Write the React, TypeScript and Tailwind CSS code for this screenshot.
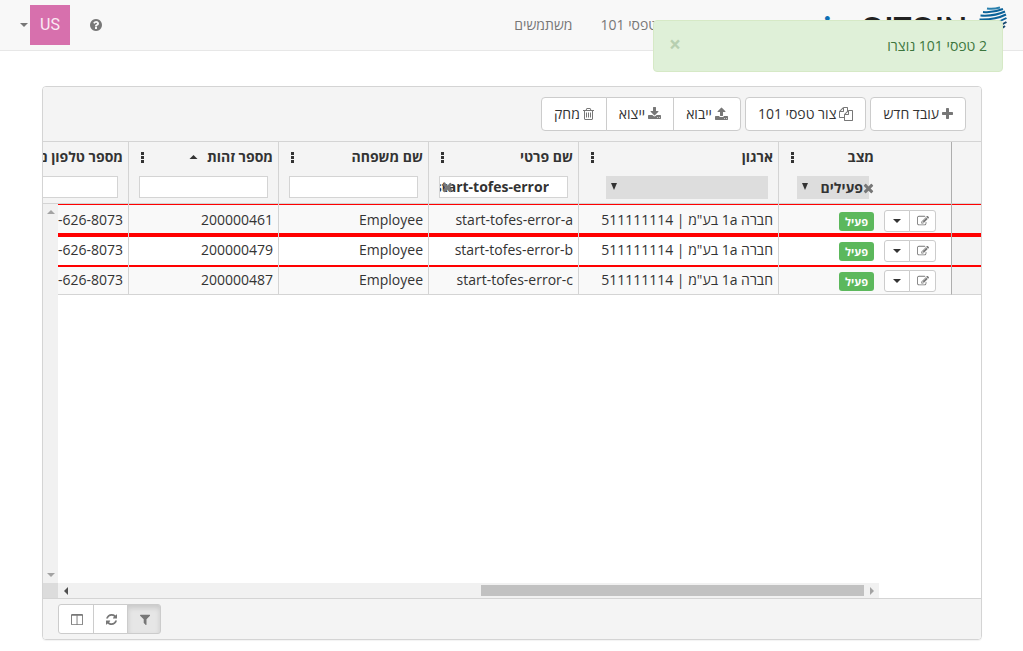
import type { ReactNode } from "react"

const icons = {
  plus: { w: 1408, d: "M1600 736v192q0 40-28 68t-68 28h-416v416q0 40-28 68t-68 28h-192q-40 0-68-28t-28-68v-416h-416q-40 0-68-28t-28-68v-192q0-40 28-68t68-28h416v-416q0-40 28-68t68-28h192q40 0 68 28t28 68v416h416q40 0 68 28t28 68z" },
  copy: { w: 1792, d: "M1696 384q40 0 68 28t28 68v1216q0 40-28 68t-68 28h-960q-40 0-68-28t-28-68v-288h-544q-40 0-68-28t-28-68v-672q0-40 20-88t48-76l408-408q28-28 76-48t88-20h416q40 0 68 28t28 68v328q68-40 128-40h416zm-544 213l-299 299h299v-299zm-640-384l-299 299h299v-299zm196 647l316-316v-416h-384v416q0 40-28 68t-68 28h-416v640h512v-256q0-40 20-88t48-76zm956 804v-1152h-384v416q0 40-28 68t-68 28h-416v640h896z" },
  upload: { w: 1664, d: "M1344 1472q0-26-19-45t-45-19-45 19-19 45 19 45 45 19 45-19 19-45zm256 0q0-26-19-45t-45-19-45 19-19 45 19 45 45 19 45-19 19-45zm128-224v320q0 40-28 68t-68 28h-1472q-40 0-68-28t-28-68v-320q0-40 28-68t68-28h427q21 56 70.5 92t110.5 36h256q61 0 110.5-36t70.5-92h427q40 0 68 28t28 68zm-325-648q-17 40-59 40h-256v448q0 26-19 45t-45 19h-256q-26 0-45-19t-19-45v-448h-256q-42 0-59-40-17-39 14-69l448-448q18-19 45-19t45 19l448 448q31 30 14 69z" },
  download: { w: 1664, d: "M1344 1344q0-26-19-45t-45-19-45 19-19 45 19 45 45 19 45-19 19-45zm256 0q0-26-19-45t-45-19-45 19-19 45 19 45 45 19 45-19 19-45zm128-224v320q0 40-28 68t-68 28h-1472q-40 0-68-28t-28-68v-320q0-40 28-68t68-28h465l135 136q58 56 136 56t136-56l136-136h464q40 0 68 28t28 68zm-325-569q17 41-14 70l-448 448q-18 19-45 19t-45-19l-448-448q-31-29-14-70 17-39 59-39h256v-448q0-26 19-45t45-19h256q26 0 45 19t19 45v448h256q42 0 59 39z" },
  trash: { w: 1408, d: "M704 736v576q0 14-9 23t-23 9h-64q-14 0-23-9t-9-23v-576q0-14 9-23t23-9h64q14 0 23 9t9 23zm256 0v576q0 14-9 23t-23 9h-64q-14 0-23-9t-9-23v-576q0-14 9-23t23-9h64q14 0 23 9t9 23zm256 0v576q0 14-9 23t-23 9h-64q-14 0-23-9t-9-23v-576q0-14 9-23t23-9h64q14 0 23 9t9 23zm128 724v-948h-896v948q0 22 7 40.5t14.5 27 10.5 8.5h832q3 0 10.5-8.5t14.5-27 7-40.5zm-672-1076h448l-48-117q-7-9-17-11h-317q-10 2-17 11zm928 32v64q0 14-9 23t-23 9h-96v948q0 83-47 143.5t-113 60.5h-832q-66 0-113-58.5t-47-141.5v-952h-96q-14 0-23-9t-9-23v-64q0-14 9-23t23-9h309l70-167q15-37 54-63t79-26h320q40 0 79 26t54 63l70 167h309q14 0 23 9t9 23z" },
  help: { w: 1536, d: "M1024 1376v-192q0-14-9-23t-23-9h-192q-14 0-23 9t-9 23v192q0 14 9 23t23 9h192q14 0 23-9t9-23zm256-672q0-88-55.5-163t-138.5-116-170-41q-243 0-371 213-15 24 8 42l132 100q7 6 19 6 16 0 25-12 53-68 86-92 34-24 86-24 48 0 85.5 26t37.5 59q0 38-20 61t-68 45q-63 28-115.5 86.5t-52.5 125.5v36q0 14 9 23t23 9h192q14 0 23-9t9-23q0-19 21.5-49.5t54.5-49.5q32-18 49-28.5t46-35 44.5-48 28-60.5 12.5-81zm384 192q0 209-103 385.5t-279.5 279.5-385.5 103-385.5-103-279.5-279.5-103-385.5 103-385.5 279.5-279.5 385.5-103 385.5 103 279.5 279.5 103 385.5z" },
  refresh: { w: 1536, d: "M1639 1056q0 5-1 7-64 268-268 434.5t-478 166.5q-146 0-282.5-55t-243.5-157l-129 129q-19 19-45 19t-45-19-19-45v-448q0-26 19-45t45-19h448q26 0 45 19t19 45-19 45l-137 137q71 66 161 102t187 36q134 0 250-65t186-179q11-17 53-117 8-23 30-23h192q13 0 22.5 9.5t9.5 22.5zm25-800v448q0 26-19 45t-45 19h-448q-26 0-45-19t-19-45 19-45l138-138q-148-137-349-137-134 0-250 65t-186 179q-11 17-53 117-8 23-30 23h-199q-13 0-22.5-9.5t-9.5-22.5v-7q65-268 270-434.5t480-166.5q146 0 284 55.5t245 156.5l130-129q19-19 45-19t45 19 19 45z" },
  filter: { w: 1408, d: "M1595 295q17 41-14 70l-493 493v742q0 42-39 59-13 5-25 5-27 0-45-19l-256-256q-19-19-19-45v-486l-493-493q-31-29-14-70 17-39 59-39h1280q42 0 59 39z" },
  edit: { w: 1792, d: "M888 1184l116-116-152-152-116 116v56h96v96h56zm440-720q-16-16-33 1l-350 350q-17 17-1 33t33-1l350-350q17-17 1-33zm80 594v190q0 119-84.5 203.5t-203.5 84.5h-832q-119 0-203.5-84.5t-84.5-203.5v-832q0-119 84.5-203.5t203.5-84.5h832q63 0 117 25 15 7 18 23 3 17-9 29l-49 49q-14 14-32 8-23-6-45-6h-832q-66 0-113 47t-47 113v832q0 66 47 113t113 47h832q66 0 113-47t47-113v-126q0-13 9-22l64-64q15-15 35-7t20 29zm-96-738l288 288-672 672h-288v-288zm444 132l-92 92-288-288 92-92q28-28 68-28t68 28l152 152q28 28 28 68t-28 68z" },
  columns: { w: 1664, d: "M224 1536h608v-1152h-640v1120q0 13 9.500 22.500t22.500 9.500zm1376-32v-1120h-640v1152h608q13 0 22.500-9.500t9.500-22.500zm128-1216v1216q0 66-47 113t-113 47h-1344q-66 0-113-47t-47-113v-1216q0-66 47-113t113-47h1344q66 0 113 47t47 113z" },
  times: { w: 1408, d: "M1490 1322q0 40-28 68l-136 136q-28 28-68 28t-68-28l-294-294-294 294q-28 28-68 28t-68-28l-136-136q-28-28-28-68t28-68l294-294-294-294q-28-28-28-68t28-68l136-136q28-28 68-28t68 28l294 294 294-294q28-28 68-28t68 28l136 136q28 28 28 68t-28 68l-294 294 294 294q28 28 28 68z" },
}

function Icon({ name, className = "h-[14px]" }: { name: keyof typeof icons; className?: string }) {
  const { w, d } = icons[name]
  return (
    <svg className={`${className} shrink-0 fill-current`} viewBox={`${(1792 - w) / 2} 0 ${w} 1792`} aria-hidden="true">
      <path d={d} />
    </svg>
  )
}

function Caret({ className = "" }: { className?: string }) {
  return (
    <svg className={`h-1 w-2 fill-current ${className}`} viewBox="0 0 8 4" aria-hidden="true">
      <path d="M0 0h8L4 4z" />
    </svg>
  )
}

function Dots() {
  return (
    <button type="button" aria-label="תפריט עמודה" className="flex flex-col gap-px p-px">
      <i className="size-[3px] bg-[#333]" />
      <i className="size-[3px] bg-[#333]" />
      <i className="size-[3px] bg-[#333]" />
    </button>
  )
}

function Globe() {
  return (
    <svg className="size-7" viewBox="0 0 28 28" fill="none" stroke="#0b6299" strokeWidth="2" aria-hidden="true">
      <path d="M8 2.500Q14 3.500 21 1.500" stroke="#2a80ad" />
      <path d="M4 6Q14 7 24 3" />
      <path d="M1.500 9.500Q15 10.500 26 5.500" />
      <path d="M0.500 13.500Q16 14 27 8.500" />
      <path d="M1 17.500Q17 18 27.500 12" />
      <path d="M3 21.500Q19 22 27.500 16" stroke="#164a70" />
      <path d="M7 25Q19 26 26 20" stroke="#164a70" />
    </svg>
  )
}

function ColumnHead({ title, sorted, children }: { title: string; sorted?: boolean; children: ReactNode }) {
  return (
    <th className="border-b border-l border-[#d4d4d4] p-0 align-top text-right font-bold">
      <div className="flex items-center justify-between pt-1 pr-[5px] pl-[11px]">
        <span className="flex items-center gap-[9px] leading-[22px] whitespace-nowrap">
          {title}
          {sorted && <Caret className="w-[9px] rotate-180" />}
        </span>
        <Dots />
      </div>
      <div className="relative flex px-[10px] pt-2">{children}</div>
    </th>
  )
}

function TextFilter({ label, value = "" }: { label: string; value?: string }) {
  return (
    <>
      <input
        aria-label={label}
        defaultValue={value}
        className="h-[22px] w-full border border-[#d4d4d4] bg-white pr-[18px] pb-[2px] outline-none"
      />
      {value && <Icon name="times" className="absolute top-3 left-[13px] h-[14px] text-[#777]" />}
    </>
  )
}

function SelectFilter({ label, value = "" }: { label: string; value?: string }) {
  return (
    <>
      <div className={value ? "relative w-[72px]" : "relative w-[162px]"}>
        <select aria-label={label} className="h-[23px] w-full appearance-none bg-[#ddd] pr-[6px] pl-4 outline-none">
          <option>{value}</option>
        </select>
        <svg className="pointer-events-none absolute top-[7px] left-[5px] h-[7px] w-[6px] fill-[#333]" viewBox="0 0 6 7" aria-hidden="true">
          <path d="M0 0h6L3 7z" />
        </svg>
      </div>
      {value && <Icon name="times" className="absolute top-[13px] right-[5px] h-[14px] text-[#777]" />}
    </>
  )
}

const employees = [
  { first: "start-tofes-error-a", id: "200000461" },
  { first: "start-tofes-error-b", id: "200000479" },
  { first: "start-tofes-error-c", id: "200000487" },
]

// the separators between failed rows are painted inside the cells
const rowStyles = [
  "h-[31px] bg-[#f9f9f9] *:shadow-[inset_0_1px_#f00,inset_0_-2px_#f00]",
  "h-[30px] bg-white *:shadow-[inset_0_2px_#f00]",
  "h-[30px] bg-[#f9f9f9] *:border-b *:shadow-[inset_0_2px_#f00]",
]

const toolButton = "flex h-[34px] items-center gap-[3px] border border-[#ccc] bg-white px-3 whitespace-nowrap"
const footButton = "flex h-[30px] items-center justify-center border border-[#ccc] pl-[2px] text-[#777]"
const cell = "border-l border-[#d4d4d4] px-[5px] py-0 whitespace-nowrap"

export default function App() {
  return (
    <div dir="rtl" className="min-h-screen bg-white pb-3 font-['Open_Sans','Noto_Sans',sans-serif] text-[14px] leading-5 text-[#333]">
      <nav className="flex h-[51px] border-b border-[#e7e7e7] bg-[#f8f8f8] text-[#777]">
        <a href="#" dir="ltr" className="flex w-[352px] shrink-0 items-start justify-end gap-3 pt-[6px] pr-4 font-['Lato',sans-serif] text-[30px] leading-8 font-bold text-[#222]">
          <span className="flex gap-3 pt-[5px] whitespace-nowrap">
            <span className="text-[#0b6fb5]">io</span>
            <span>OITOIN</span>
          </span>
          <Globe />
        </a>
        <a href="#" className="px-[14px] py-[15px]">טפסי 101</a>
        <a href="#" className="px-[14px] py-[15px]">משתמשים</a>
        <div className="mr-auto flex items-center pl-5">
          <a href="#" aria-label="עזרה" className="px-5"><Icon name="help" /></a>
          <button type="button" className="flex items-center gap-[2px]">
            <span className="flex size-10 items-center justify-center bg-[#d770ad] font-['Roboto',sans-serif] text-base text-[#fbeaf4]">US</span>
            <Caret />
          </button>
        </div>
      </nav>

      <div role="alert" className="fixed top-5 right-5 flex h-[52px] w-[350px] items-center justify-between rounded-[4px] border border-[#d6e9c6] bg-[#dff0d8] px-[15px] text-[#3c763d]">
        <span>2 טפסי 101 נוצרו</span>
        <button type="button" aria-label="סגור" className="pb-1 text-[21px] leading-5 font-bold text-[#b7cfb1]">×</button>
      </div>

      <main className="mt-[35px] mr-[41px] ml-[42px] overflow-hidden rounded-[4px] border border-[#d4d4d4] shadow-[0_1px_1px_rgba(0,0,0,0.05)]">
        <div className="flex gap-1 bg-[#f4f4f4] py-[10px] pr-[15px]">
          <button type="button" className={`${toolButton} rounded-[4px]`}><Icon name="plus" className="h-[14px] text-[#777]" />עובד חדש</button>
          <button type="button" className={`${toolButton} rounded-[4px]`}><Icon name="copy" className="h-[14px] text-[#777]" />צור טפסי 101</button>
          <div className="flex">
            <button type="button" className={`${toolButton} rounded-r-[4px]`}><Icon name="upload" className="h-[14px] text-[#777]" />ייבוא</button>
            <button type="button" className={`${toolButton} -mr-px`}><Icon name="download" className="h-[14px] text-[#777]" />ייצוא</button>
            <button type="button" className={`${toolButton} -mr-px rounded-l-[4px]`}><Icon name="trash" className="h-[14px] text-[#777]" />מחק</button>
          </div>
        </div>

        <div className="relative flex h-[457px] flex-col border-t border-[#d4d4d4]">
          <div className="flex-1 overflow-hidden">
            <table className="w-[1003px] table-fixed border-separate border-spacing-0">
              <colgroup>
                <col className="w-[30px]" />
                <col className="w-[72px]" />
                <col className="w-[101px]" />
                <col className="w-[200px]" />
                <col className="w-[150px]" />
                <col className="w-[150px]" />
                <col className="w-[150px]" />
                <col className="w-[150px]" />
              </colgroup>
              <thead>
                <tr className="h-[62px] bg-[#f4f4f4]">
                  <td className="border-b border-l border-b-[#d4d4d4] border-l-[#aeaeae]" />
                  <td className="border-b border-[#d4d4d4]" />
                  <ColumnHead title="מצב"><SelectFilter label="מצב" value="פעילים" /></ColumnHead>
                  <ColumnHead title="ארגון"><SelectFilter label="ארגון" /></ColumnHead>
                  <ColumnHead title="שם פרטי"><TextFilter label="שם פרטי" value="start-tofes-error" /></ColumnHead>
                  <ColumnHead title="שם משפחה"><TextFilter label="שם משפחה" /></ColumnHead>
                  <ColumnHead title="מספר זהות" sorted><TextFilter label="מספר זהות" /></ColumnHead>
                  <ColumnHead title="מספר טלפון נייד"><TextFilter label="מספר טלפון נייד" /></ColumnHead>
                </tr>
              </thead>
              <tbody>
                {employees.map((e, i) => (
                  <tr key={e.id} className={rowStyles[i]}>
                    <td className="border-l border-b-[#d4d4d4] border-l-[#aeaeae] bg-[#f3f3f3]" />
                    <td className="border-[#d4d4d4] py-0 pr-[15px] pl-[5px]">
                      <div className="flex pt-[2px]">
                        <button type="button" aria-label="עריכה" className="flex h-[22px] w-[27px] items-center justify-center rounded-r-[3px] border border-[#ccc] bg-white text-[#777]">
                          <Icon name="edit" className="h-3" />
                        </button>
                        <button type="button" aria-label="פעולות" className="-mr-px flex h-[22px] w-[26px] items-center justify-center rounded-l-[3px] border border-[#ccc] bg-white">
                          <Caret />
                        </button>
                      </div>
                    </td>
                    <td className={cell}>
                      <span className="mt-[3px] flex h-[19px] w-[35px] items-center justify-center rounded-[3px] bg-[#5cb85c] text-[11px] leading-none font-bold text-white">פעיל</span>
                    </td>
                    <td className={cell}>חברה 1a בע"מ | 511111114</td>
                    <td className={cell}>{e.first}</td>
                    <td className={cell}>Employee</td>
                    <td className={cell}>{e.id}</td>
                    <td className={cell}><span dir="ltr">050-626-8073</span></td>
                  </tr>
                ))}
              </tbody>
            </table>
          </div>

          <div className="absolute top-[62px] bottom-[15px] left-0 flex w-[15px] flex-col items-center justify-between bg-[#f1f1f1] py-[6px] text-[#a3a3a3]">
            <Caret className="rotate-180" />
            <Caret />
          </div>

          <div dir="ltr" className="flex h-[15px] pr-[102px]">
            <div className="w-[15px] bg-[#dcdcdc]" />
            <div className="flex flex-1 items-center bg-[#f1f1f1]">
              <div className="flex w-[15px] justify-center text-[#505050]"><Caret className="rotate-90" /></div>
              <div className="ml-auto h-[11px] w-[383px] bg-[#c1c1c1]" />
              <div className="flex w-[15px] justify-center text-[#a3a3a3]"><Caret className="-rotate-90" /></div>
            </div>
          </div>
        </div>

        <div dir="ltr" className="flex border-t border-[#d4d4d4] bg-[#f4f4f4] py-[5px] pl-[15px]">
          <button type="button" aria-label="עמודות" className={`${footButton} w-9 rounded-l-[3px] bg-white`}><Icon name="columns" className="h-[13px]" /></button>
          <button type="button" aria-label="רענון" className={`${footButton} -ml-px w-[35px] bg-white`}><Icon name="refresh" className="h-[13px]" /></button>
          <button type="button" aria-label="סינון" className={`${footButton} -ml-px w-[34px] rounded-r-[3px] border-[#adadad] bg-[#e6e6e6] shadow-[inset_0_3px_5px_rgba(0,0,0,0.125)]`}><Icon name="filter" className="h-[13px]" /></button>
        </div>
      </main>
    </div>
  )
}
